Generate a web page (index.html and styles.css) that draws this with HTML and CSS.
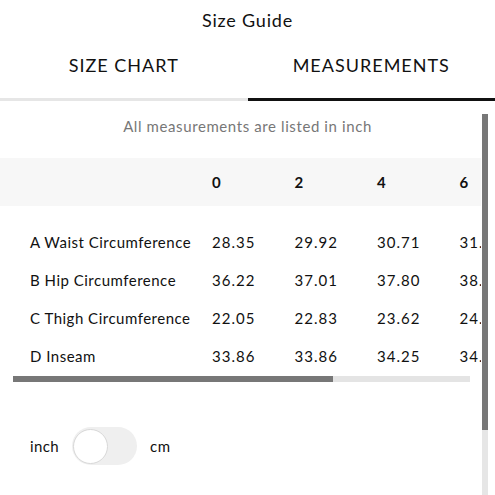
FILE: index.html
```html
<!DOCTYPE html>
<html lang="en">
<head>
<meta charset="utf-8">
<title>Size Guide</title>
<link rel="stylesheet" href="styles.css">
</head>
<body>
<header class="title">Size Guide</header>
<nav class="tabs">
  <div class="tab">SIZE CHART</div>
  <div class="tab active">MEASUREMENTS</div>
</nav>
<div class="body">
  <main class="main">
    <p class="note">All measurements are listed in inch</p>
    <div class="table-wrap">
      <div class="table">
        <div class="row head">
          <div class="cell label"></div>
          <div class="cell">0</div>
          <div class="cell">2</div>
          <div class="cell">4</div>
          <div class="cell">6</div>
          <div class="cell">8</div>
          <div class="cell">10</div>
        </div>
        <div class="row first">
          <div class="cell label">A Waist Circumference</div>
          <div class="cell">28.35</div>
          <div class="cell">29.92</div>
          <div class="cell">30.71</div>
          <div class="cell">31.50</div>
          <div class="cell">33.07</div>
          <div class="cell">34.65</div>
        </div>
        <div class="row">
          <div class="cell label">B Hip Circumference</div>
          <div class="cell">36.22</div>
          <div class="cell">37.01</div>
          <div class="cell">37.80</div>
          <div class="cell">38.58</div>
          <div class="cell">40.16</div>
          <div class="cell">41.73</div>
        </div>
        <div class="row">
          <div class="cell label">C Thigh Circumference</div>
          <div class="cell">22.05</div>
          <div class="cell">22.83</div>
          <div class="cell">23.62</div>
          <div class="cell">24.41</div>
          <div class="cell">25.98</div>
          <div class="cell">27.56</div>
        </div>
        <div class="row">
          <div class="cell label">D Inseam</div>
          <div class="cell">33.86</div>
          <div class="cell">33.86</div>
          <div class="cell">34.25</div>
          <div class="cell">34.25</div>
          <div class="cell">34.65</div>
          <div class="cell">34.65</div>
        </div>
      </div>
    </div>
    <div class="hscroll"><div class="hthumb"></div></div>
    <div class="units">
      <span class="unit">inch</span>
      <span class="switch"><span class="knob"></span></span>
      <span class="unit">cm</span>
    </div>
  </main>
  <div class="vscroll"><div class="vthumb"></div></div>
</div>
</body>
</html>
```
FILE: styles.css
```css
html, body {
  margin: 0;
  padding: 0;
  background: #fff;
  height: 100%;
  overflow: hidden;
}
body {
  font-family: "Lato", "Liberation Sans", sans-serif;
  color: #111;
}
.title {
  text-align: center;
  font-size: 18px;
  line-height: 20px;
  padding-top: 10px;
  letter-spacing: 0.8px;
}
.tabs {
  display: flex;
  margin-top: 24px;
}
.tab {
  flex: 1;
  text-align: center;
  font-size: 18px;
  line-height: 22px;
  letter-spacing: 1px;
  padding-bottom: 22px;
  border-bottom: 3px solid #e6e6e6;
}
.tab.active {
  border-bottom-color: #111;
}
.body {
  display: flex;
  height: 395px;
}
.main {
  width: 481px;
  overflow: hidden;
}
.note {
  margin: 16px 0 0;
  padding-left: 14px;
  text-align: center;
  font-size: 15px;
  line-height: 18px;
  color: #777;
  letter-spacing: 0.6px;
}
.table-wrap {
  margin-top: 23px;
  overflow: hidden;
}
.table {
  width: max-content;
}
.row {
  display: grid;
  grid-template-columns: 182px repeat(6, 82.5px);
  padding-left: 30px;
  height: 38px;
  align-items: center;
  font-size: 15px;
  letter-spacing: 1px;
}
.row.head {
  height: 48px;
  background: #f7f7f7;
  font-weight: 700;
  margin-bottom: 17px;
}
.cell.label {
  letter-spacing: 0.5px;
}
.hscroll {
  margin: 1px 11px 0 13px;
  height: 6px;
  background: #e4e4e4;
}
.hthumb {
  width: 70%;
  height: 100%;
  background: #777;
}
.units {
  display: flex;
  align-items: center;
  padding-left: 30px;
  margin-top: 45px;
  font-size: 15px;
  letter-spacing: 0.4px;
}
.switch {
  width: 65px;
  height: 38px;
  border-radius: 19px;
  background: #efefef;
  margin: 0 13px 0 13px;
  display: flex;
  align-items: center;
  padding-left: 1px;
  box-sizing: border-box;
}
.knob {
  width: 35px;
  height: 35px;
  border-radius: 50%;
  background: #fff;
  border: 1px solid #d8d8d8;
  box-sizing: border-box;
}
.vscroll {
  width: 6px;
  margin: 13px 0 0 1px;
  background: #e6e6e6;
  display: flex;
  flex-direction: column;
}
.vthumb {
  height: 316px;
  background: #777;
}
```
